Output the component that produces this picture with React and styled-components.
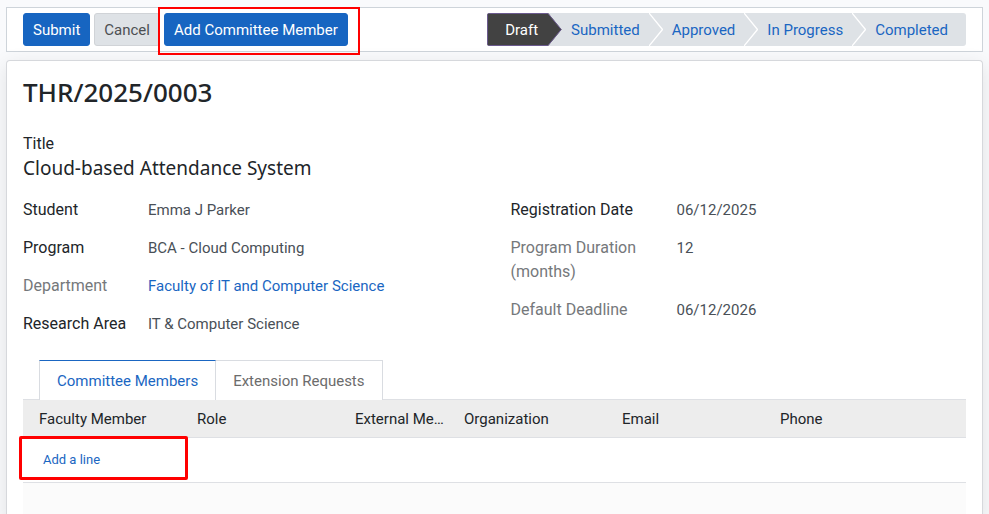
import React from "react";
import styled, { createGlobalStyle, css } from "styled-components";

const GlobalStyle = createGlobalStyle`
    * {
        box-sizing: border-box;
    }
    body {
        margin: 0;
        background: #f9fafc;
        color: #212529;
        font-family: Roboto, "Liberation Sans", sans-serif;
        font-size: 15px;
        line-height: 24px;
    }
    button {
        font: inherit;
        cursor: pointer;
    }
    a {
        color: #1a66c2;
        text-decoration: none;
    }
`;

const Page = styled.div`
    height: 100vh;
    padding: 7px 6px 0;
    display: flex;
    flex-direction: column;
    gap: 8px;
    overflow: hidden;
`;

const ControlBar = styled.header`
    display: flex;
    align-items: center;
    justify-content: space-between;
    padding: 5px 16px;
    background: white;
    border: 1px solid #ced4da;
`;

const Actions = styled.div`
    display: flex;
    gap: 4px;
`;

const Button = styled.button`
    height: 33px;
    padding: 0 9px;
    border: 1px solid ${({ $primary }) => ($primary ? "#1765c1" : "#d0d3d7")};
    border-radius: 3px;
    background: ${({ $primary }) => ($primary ? "#1765c1" : "#dee2e6")};
    color: ${({ $primary }) => ($primary ? "white" : "#4c4f53")};
`;

const Marked = styled.div`
    position: relative;
    display: flex;
    &::after {
        content: "";
        position: absolute;
        inset: ${({ $inset }) => $inset};
        border: ${({ $thick }) => ($thick ? 3 : 2)}px solid #ff0000;
        border-radius: ${({ $thick }) => ($thick ? 2 : 0)}px;
        pointer-events: none;
    }
`;

const StatusBar = styled.nav`
    display: flex;
    height: 33px;
    border-radius: 3px;
    overflow: hidden;
    background: #dee2e6;
`;

const Step = styled.button`
    padding: 0 9px;
    border: none;
    background: transparent;
    color: #1a66c2;
    &:last-child {
        padding-right: 18px;
    }
    ${({ $active }) =>
        $active &&
        css`
            padding: 0 10px 0 17px;
            border: solid #6b5a8e;
            border-width: 1px 0 1px 1px;
            background: #424242;
            color: white;
        `}
`;

const Arrow = styled.svg`
    width: 14px;
    height: 33px;
    flex: none;
`;

const Sheet = styled.main`
    flex: 1;
    padding: 15px 16px 0;
    background: white;
    border: 1px solid #d6d8dc;
    border-bottom: none;
    border-radius: 4px 4px 0 0;
    box-shadow: 0 5px 20px rgba(0, 0, 0, 0.1);
`;

const RecordName = styled.h1`
    margin: 0 0 24px;
    font-family: "Noto Sans", "Open Sans", sans-serif;
    font-size: 26px;
    font-weight: 500;
    line-height: 32px;
`;

const TitleLabel = styled.div`
    font-size: 16px;
`;

const Title = styled.h2`
    margin: 0 0 18px;
    font-family: "Noto Sans", "Open Sans", sans-serif;
    font-size: 19px;
    font-weight: 400;
    line-height: 24px;
`;

const Groups = styled.div`
    display: grid;
    grid-template-columns: 1fr 1fr;
    column-gap: 32px;
    align-items: start;
`;

const Group = styled.dl`
    display: grid;
    grid-template-columns: ${({ $labelWidth }) => $labelWidth}px 1fr;
    row-gap: 14px;
    margin: 0;
`;

const Label = styled.dt`
    padding-right: 8px;
    font-size: 16px;
    color: ${({ $muted }) => ($muted ? "#75787b" : "#212529")};
`;

const Value = styled.dd`
    margin: 0;
    color: #495057;
`;

const Tabs = styled.div`
    display: flex;
    margin-top: 24px;
    padding-left: 16px;
`;

const Tab = styled.button`
    height: 40px;
    padding: 0 17px;
    margin: 0 -1px -1px 0;
    border: 1px solid #d9dce1;
    border-bottom: none;
    background: white;
    color: #6c6c6c;
    ${({ $active }) =>
        $active &&
        css`
            position: relative;
            border-top-color: #1a66c2;
            color: #1a66c2;
        `}
`;

const Lines = styled.table`
    width: 100%;
    table-layout: fixed;
    border-collapse: collapse;
`;

const HeadCell = styled.th`
    width: ${({ $width }) => $width}px;
    height: 38px;
    padding: 0 8px;
    border: solid #dee0e4;
    border-width: 1px 0;
    background: #ededed;
    font-weight: 400;
    text-align: left;
    white-space: nowrap;
    overflow: hidden;
    text-overflow: ellipsis;
    &:first-child {
        padding-left: 16px;
    }
`;

const Cell = styled.td`
    height: ${({ $filler }) => ($filler ? 38 : 45)}px;
    padding: 0;
    border-bottom: 1px solid #dee0e4;
    background: ${({ $filler }) => ($filler ? "#fbfbfb" : "white")};
    font-size: 13px;
`;

const AddLine = styled.a`
    padding-left: 20px;
`;

const steps = ["Draft", "Submitted", "Approved", "In Progress", "Completed"];

const leftFields = [
    { label: "Student", value: "Emma J Parker" },
    { label: "Program", value: "BCA - Cloud Computing" },
    { label: "Department", value: "Faculty of IT and Computer Science", muted: true, link: true },
    { label: "Research Area", value: "IT & Computer Science" },
];

const rightFields = [
    { label: "Registration Date", value: "06/12/2025" },
    { label: "Program Duration (months)", value: "12", muted: true },
    { label: "Default Deadline", value: "06/12/2026", muted: true },
];

const columns = [
    { name: "Faculty Member", width: 166 },
    { name: "Role", width: 158 },
    { name: "External Member", width: 109 },
    { name: "Organization", width: 158 },
    { name: "Email", width: 158 },
    { name: "Phone", width: 194 },
];

const StepArrow = ({ filled }) => (
    <Arrow viewBox="0 0 14 33" aria-hidden="true">
        {filled ? (
            <>
                <path d="M0 0L13.5 16.5L0 33Z" fill="#424242" />
                <path d="M0 .5L13.2 16.5L0 32.5" fill="none" stroke="#6b5a8e" />
            </>
        ) : (
            <path d="M0 0L13.5 16.5L0 33" fill="none" stroke="white" strokeWidth="1.3" />
        )}
    </Arrow>
);

const FieldGroup = ({ fields, labelWidth }) => (
    <Group $labelWidth={labelWidth}>
        {fields.map(field => (
            <React.Fragment key={field.label}>
                <Label $muted={field.muted}>{field.label}</Label>
                <Value>{field.link ? <a href="#department">{field.value}</a> : field.value}</Value>
            </React.Fragment>
        ))}
    </Group>
);

const App = () => {
    return (
        <Page>
            <GlobalStyle />
            <ControlBar>
                <Actions>
                    <Button $primary>Submit</Button>
                    <Button>Cancel</Button>
                    <Marked $inset="-6px -12px -9px -6px">
                        <Button $primary>Add Committee Member</Button>
                    </Marked>
                </Actions>
                <StatusBar>
                    {steps.map((step, i) => (
                        <React.Fragment key={step}>
                            {i > 0 && <StepArrow filled={i === 1} />}
                            <Step $active={i === 0}>{step}</Step>
                        </React.Fragment>
                    ))}
                </StatusBar>
            </ControlBar>
            <Sheet>
                <RecordName>THR/2025/0003</RecordName>
                <TitleLabel>Title</TitleLabel>
                <Title>Cloud-based Attendance System</Title>
                <Groups>
                    <FieldGroup fields={leftFields} labelWidth={125} />
                    <FieldGroup fields={rightFields} labelWidth={166} />
                </Groups>
                <Tabs role="tablist">
                    <Tab role="tab" aria-selected="true" $active>Committee Members</Tab>
                    <Tab role="tab" aria-selected="false">Extension Requests</Tab>
                </Tabs>
                <Lines>
                    <thead>
                        <tr>
                            {columns.map(column => (
                                <HeadCell key={column.name} $width={column.width}>{column.name}</HeadCell>
                            ))}
                        </tr>
                    </thead>
                    <tbody>
                        <tr>
                            <Cell>
                                <Marked $thick $inset="-12px 1px -8px -4px">
                                    <AddLine href="#add">Add a line</AddLine>
                                </Marked>
                            </Cell>
                            <Cell colSpan={5} />
                        </tr>
                        <tr>
                            <Cell $filler colSpan={6} />
                        </tr>
                    </tbody>
                </Lines>
            </Sheet>
        </Page>
    );
};

export default App;
